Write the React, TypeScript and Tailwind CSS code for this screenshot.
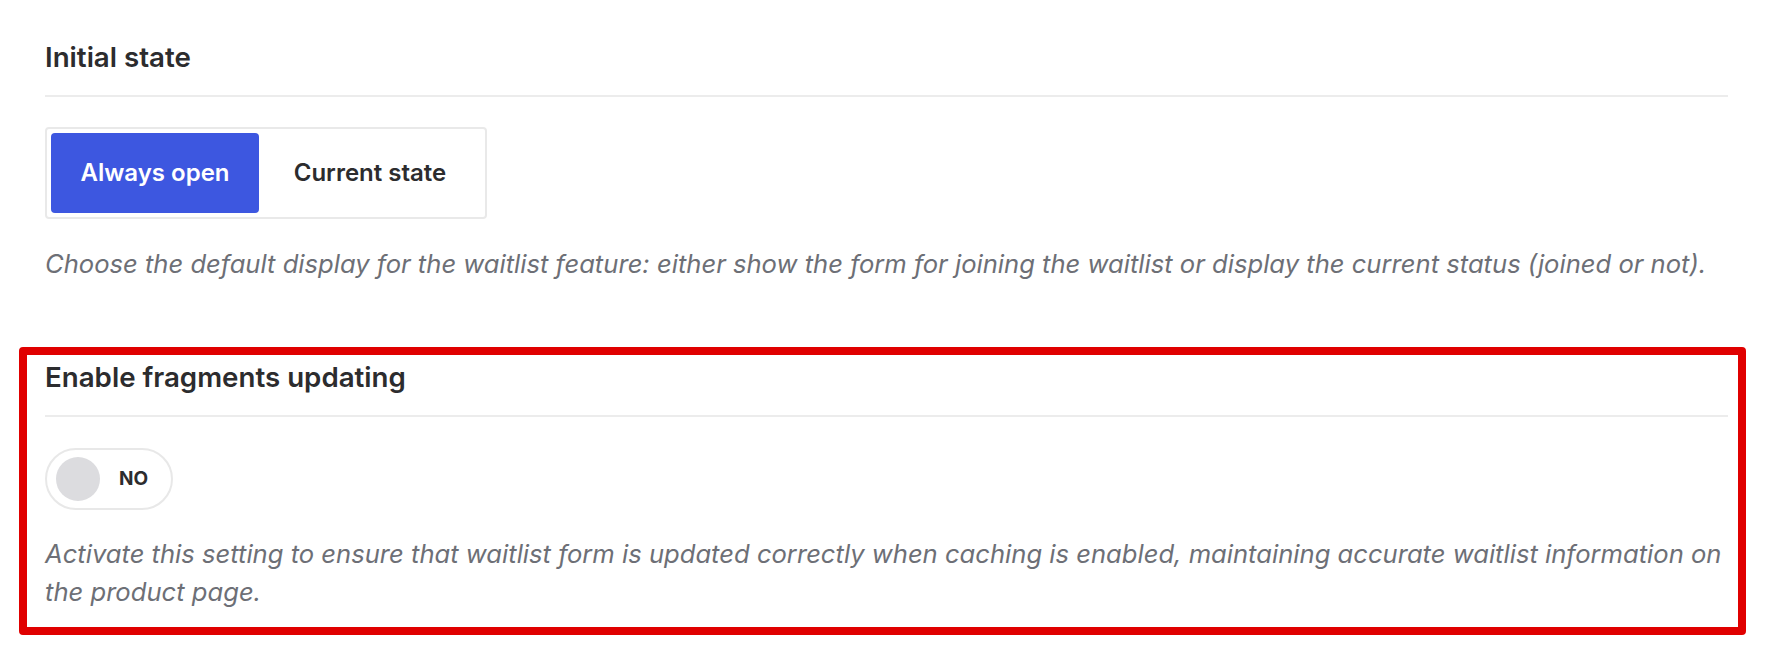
import React from "react"

const font = { fontFamily: "Inter, 'Noto Sans', sans-serif" }

function SectionTitle({ children }: { children: React.ReactNode }) {
  return (
    <>
      <h3 className="text-[27.7px] leading-[36px] font-semibold text-[#2c2c2e]">{children}</h3>
      <div className="mt-[20px] h-[2px] bg-[#ececec]" />
    </>
  )
}

function Description({ children, className = "" }: { children: React.ReactNode; className?: string }) {
  return <p className={`text-[25.6px] leading-[38px] italic text-[#6d6f76] ${className}`}>{children}</p>
}

export default function App() {
  return (
    <div className="min-h-screen bg-white pl-[45px] pr-[40px] pt-[39px]" style={font}>
      {/* Initial state */}
      <section>
        <SectionTitle>Initial state</SectionTitle>
        <div className="mt-[30px] inline-flex items-stretch rounded-[4px] border-2 border-[#e9e9e9] p-[4px]">
          <button className="h-[80px] w-[208px] rounded-[4px] bg-[#3d57e0] text-[24px] font-semibold text-white">
            Always open
          </button>
          <button className="h-[80px] w-[222px] text-[24px] font-semibold text-[#2c2c2e]">Current state</button>
        </div>
        <Description className="mt-[26px]">
          Choose the default display for the waitlist feature: either show the form for joining the waitlist or display the current status (joined or not).
        </Description>
      </section>

      {/* Enable fragments updating */}
      <section className="relative mt-[76px]">
        <div className="pointer-events-none absolute -top-[12px] -bottom-[24px] -left-[26px] -right-[18px] rounded-[4px] border-[8px] border-[#e00000]" />
        <SectionTitle>Enable fragments updating</SectionTitle>
        <div className="mt-[31px] flex h-[62px] w-[128px] items-center rounded-full border-2 border-[#e8e8e8] pl-[9px]">
          <span className="h-[44px] w-[44px] rounded-full bg-[#dcdcdf]" />
          <span className="ml-[19px] text-[19px] font-bold text-[#2c2c2e]">NO</span>
        </div>
        <Description className="mt-[25px]">
          Activate this setting to ensure that waitlist form is updated correctly when caching is enabled, maintaining accurate waitlist information on the product page.
        </Description>
      </section>
    </div>
  )
}
